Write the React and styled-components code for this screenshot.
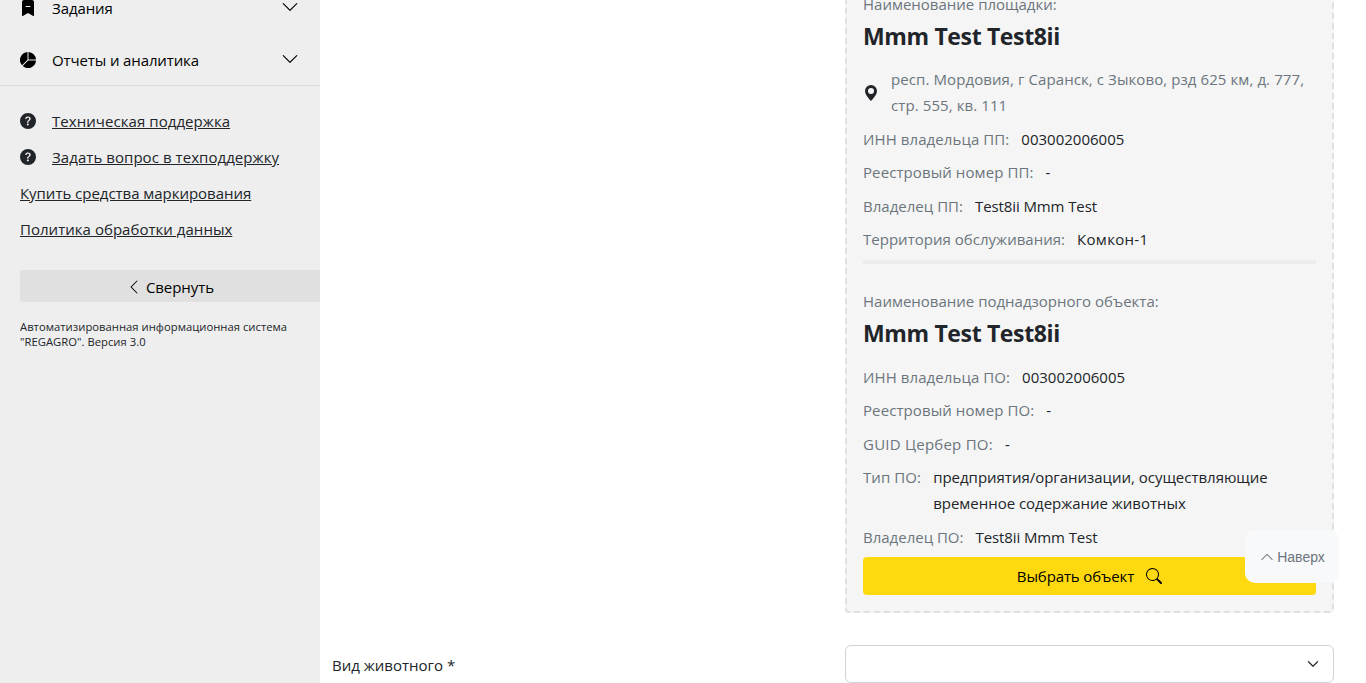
import React from "react";
import styled, { createGlobalStyle } from "styled-components";
import {
  BsBookmarkDashFill,
  BsChevronDown,
  BsChevronLeft,
  BsChevronUp,
  BsGeoAltFill,
  BsPieChartFill,
  BsQuestionCircleFill,
  BsSearch,
} from "react-icons/bs";

const GlobalStyle = createGlobalStyle`
  *, *::before, *::after { box-sizing: border-box; }
  body {
    margin: 0;
    overflow: hidden;
    background: #fff;
    color: #212529;
    font: 15px/25.6px "Open Sans", "Noto Sans", sans-serif;
  }
  svg { display: block; flex: none; }
`;

const Page = styled.div`
  display: flex;
  height: 683px;
  overflow: hidden;
`;

const Sidebar = styled.aside`
  flex: none;
  width: 320px;
  height: 100%;
  overflow: hidden;
  background: #eee;
`;

const Menu = styled.nav`
  margin-top: -18px;
  border-bottom: 1px solid #dcdcdc;
`;

const MenuItem = styled.div`
  display: flex;
  align-items: center;
  gap: 16px;
  height: 52px;
  padding: 0 21px 0 20px;
  color: #000;
  &:last-child { height: 51px; padding-top: 1px; }
`;

const MenuLabel = styled.span`
  flex: 1;
  padding-top: 1px;
  letter-spacing: ${(p) => p.$spacing || 0}px;
`;

const MenuArrow = styled(BsChevronDown)`
  margin-top: -3px;
`;

const Links = styled.div`
  display: flex;
  flex-direction: column;
  padding: 17px 0 0 20px;
`;

const LinkRow = styled.div`
  display: flex;
  align-items: center;
  gap: 16px;
  height: 36px;
`;

const Link = styled.a`
  color: #212529;
  text-decoration: underline;
  padding-top: 1px;
  letter-spacing: ${(p) => p.$spacing || 0}px;
`;

const Collapse = styled.button`
  display: flex;
  align-items: center;
  justify-content: center;
  gap: 4px;
  width: 300px;
  height: 32px;
  margin: 23px 0 0 20px;
  padding: 4px 0 0;
  border: 0;
  border-radius: 2px 0 0 2px;
  background: #e0e0e0;
  color: #000;
  font: inherit;
  letter-spacing: -0.05px;
  svg { margin-top: -2px; }
`;

const Version = styled.p`
  margin: 17px 0 0 20px;
  font-size: 11.25px;
  line-height: 15px;
  letter-spacing: 0.02px;
`;

const Main = styled.main`
  flex: 1;
  display: flex;
  flex-direction: column;
  justify-content: flex-end;
  gap: 32px;
  padding: 0 32px 0 12px;
`;

const FormRow = styled.div`
  display: grid;
  grid-template-columns: 513px 489px;
  align-items: center;
`;

const FieldLabel = styled.label`
  padding-top: 3px;
`;

const Card = styled.section`
  grid-column: 2;
  padding: 16px;
  border: 2px dashed #dee0e1;
  border-radius: 4px;
  background: #f5f5f5;
`;

const Caption = styled.div`
  color: #6c757d;
`;

const Title = styled.h4`
  margin: 4.3px 0 16.9px;
  font-size: 23px;
  font-weight: 700;
  line-height: 28.8px;
  letter-spacing: -0.36px;
`;

const Address = styled.div`
  display: flex;
  align-items: center;
  gap: 12px;
  margin-bottom: 8px;
  color: #6c757d;
  letter-spacing: 0.09px;
  svg { margin-top: -1px; color: #212529; }
`;

const Field = styled.div`
  display: flex;
  gap: 12px;
  & + & { margin-top: 7.95px; }
`;

const FieldName = styled.span`
  flex: none;
  color: #6c757d;
  letter-spacing: ${(p) => p.$spacing ?? 0.09}px;
`;

const FieldValue = styled.span`
  letter-spacing: ${(p) => p.$spacing || 0}px;
`;

const Divider = styled.hr`
  height: 4px;
  margin: 7.4px 0 25px;
  border: 0;
  background: #ededed;
`;

const SelectObject = styled.button`
  display: flex;
  align-items: center;
  justify-content: center;
  gap: 12px;
  width: 100%;
  height: 38px;
  margin-top: 6.9px;
  padding: 1px 0 0;
  border: 0;
  border-radius: 4px;
  background: #ffd90f;
  color: #000;
  font: inherit;
  letter-spacing: -0.12px;
  svg { margin-top: -2px; }
`;

const Select = styled.div`
  display: flex;
  align-items: center;
  justify-content: flex-end;
  height: 38px;
  padding-right: 14px;
  border: 1px solid #ced4da;
  border-radius: 6px;
`;

const ToTop = styled.button`
  position: fixed;
  top: 530px;
  left: 1245px;
  display: flex;
  align-items: center;
  justify-content: center;
  gap: 3px;
  width: 94px;
  height: 53px;
  padding: 0 0 0 1px;
  border: 0;
  border-radius: 10px;
  background: #f8f9fa;
  color: #6c757d;
  font: 14px "Liberation Sans", Arial, sans-serif;
`;

const siteFields = [
  { name: "ИНН владельца ПП:", value: "003002006005" },
  { name: "Реестровый номер ПП:", value: "-" },
  { name: "Владелец ПП:", nameSpacing: 0.02, value: "Test8ii Mmm Test", spacing: -0.1 },
  { name: "Территория обслуживания:", nameSpacing: 0.02, value: "Комкон-1", spacing: 0.3 },
];

const objectFields = [
  { name: "ИНН владельца ПО:", value: "003002006005" },
  { name: "Реестровый номер ПО:", value: "-" },
  { name: "GUID Цербер ПО:", nameSpacing: 0.23, value: "-" },
  {
    name: "Тип ПО:",
    value: "предприятия/организации, осуществляющие временное содержание животных",
    spacing: -0.02,
  },
  { name: "Владелец ПО:", nameSpacing: 0, value: "Test8ii Mmm Test", spacing: -0.1 },
];

const FieldList = ({ items }) =>
  items.map((item) => (
    <Field key={item.name}>
      <FieldName $spacing={item.nameSpacing}>{item.name}</FieldName>
      <FieldValue $spacing={item.spacing}>{item.value}</FieldValue>
    </Field>
  ));

export default function App() {
  return (
    <Page>
      <GlobalStyle />
      <Sidebar>
        <Menu>
          <MenuItem>
            <BsBookmarkDashFill size={16} />
            <MenuLabel $spacing={-0.1}>Задания</MenuLabel>
            <MenuArrow size={18} />
          </MenuItem>
          <MenuItem>
            <BsPieChartFill size={16} />
            <MenuLabel $spacing={-0.12}>Отчеты и аналитика</MenuLabel>
            <MenuArrow size={18} />
          </MenuItem>
        </Menu>
        <Links>
          <LinkRow>
            <BsQuestionCircleFill size={16} />
            <Link $spacing={0.06}>Техническая поддержка</Link>
          </LinkRow>
          <LinkRow>
            <BsQuestionCircleFill size={16} />
            <Link $spacing={0.06}>Задать вопрос в техподдержку</Link>
          </LinkRow>
          <LinkRow>
            <Link $spacing={-0.03}>Купить средства маркирования</Link>
          </LinkRow>
          <LinkRow>
            <Link $spacing={0.03}>Политика обработки данных</Link>
          </LinkRow>
        </Links>
        <Collapse>
          <BsChevronLeft size={16} />
          Свернуть
        </Collapse>
        <Version>
          Автоматизированная информационная система
          <br />
          "REGAGRO". Версия 3.0
        </Version>
      </Sidebar>
      <Main>
        <FormRow>
          <Card>
            <Caption>Наименование площадки:</Caption>
            <Title>Mmm Test Test8ii</Title>
            <Address>
              <BsGeoAltFill size={16} />
              <span>респ. Мордовия, г Саранск, с Зыково, рзд 625 км, д. 777, стр. 555, кв. 111</span>
            </Address>
            <FieldList items={siteFields} />
            <Divider />
            <Caption>Наименование поднадзорного объекта:</Caption>
            <Title>Mmm Test Test8ii</Title>
            <FieldList items={objectFields} />
            <SelectObject>
              Выбрать объект
              <BsSearch size={16} />
            </SelectObject>
          </Card>
        </FormRow>
        <FormRow>
          <FieldLabel>Вид животного *</FieldLabel>
          <Select>
            <BsChevronDown size={12} strokeWidth={1} />
          </Select>
        </FormRow>
      </Main>
      <ToTop>
        <BsChevronUp size={14} />
        Наверх
      </ToTop>
    </Page>
  );
}
